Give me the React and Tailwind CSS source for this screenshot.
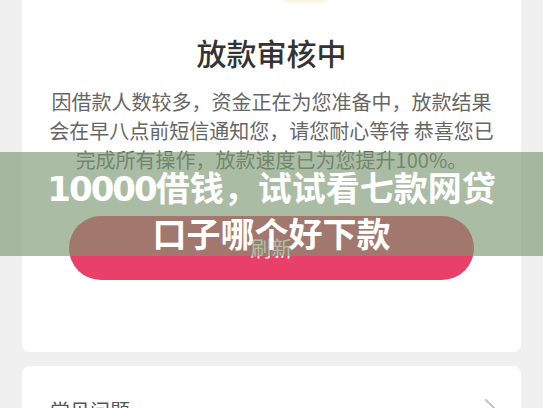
import React from "react";

export default function App() {
  return (
    <div
      className="relative w-full h-[408px] overflow-hidden bg-[#f0f0f0] px-[22px]"
      style={{ fontFamily: '"Noto Sans CJK SC", "Noto Sans", sans-serif' }}
    >
      {/* main card */}
      <div className="-mt-[20px] bg-white rounded-[8px] flex flex-col items-center pb-[72px]">
        <div className="w-full h-[23px] flex items-end justify-center pl-[67px]">
          <div className="w-[44px] h-[4px] rounded-b-full bg-[#faf7e6]" />
        </div>
        <div className="mt-[29px] text-[30px] leading-[40px] font-medium text-[#333333]">
          放款审核中
        </div>
        <div className="mt-[15px] text-[20px] leading-[29px] text-[#666666] text-center whitespace-nowrap">
          <div>因借款人数较多，资金正在为您准备中，放款结果</div>
          <div>会在早八点前短信通知您，请您耐心等待 恭喜您已</div>
          <div>完成所有操作，放款速度已为您提升100%。</div>
        </div>
        <div className="mt-[42px] self-stretch mx-[47px] h-[64px] rounded-full bg-[#e9406a] flex items-center justify-center text-white text-[21px]">
          刷新
        </div>
      </div>

      {/* second card */}
      <div className="mt-[14px] bg-white rounded-[8px] pt-[31px] pl-[28px] pr-[26px] pb-[20px] flex items-start justify-between">
        <div className="text-[20px] leading-[28px] text-[#555555]">常见问题</div>
        <svg width="10" height="18" viewBox="0 0 10 18" className="mt-[2px]">
          <polyline
            points="1,1 9,9 1,17"
            fill="none"
            stroke="#c4c4c4"
            strokeWidth="2"
            strokeLinecap="round"
            strokeLinejoin="round"
          />
        </svg>
      </div>

      {/* overlay banner */}
      <div className="absolute left-0 right-0 top-[152px] h-[104px] bg-[rgba(122,151,112,0.64)] flex flex-col items-center pt-[13px] text-white font-bold text-[34px] leading-[43px]">
        <div className="whitespace-nowrap">
          <span className="tracking-[-2px]" style={{ fontFamily: '"DejaVu Sans", sans-serif' }}>10000</span>
          借钱，试试看七款网贷
        </div>
        <div className="whitespace-nowrap">口子哪个好下款</div>
      </div>
    </div>
  );
}
